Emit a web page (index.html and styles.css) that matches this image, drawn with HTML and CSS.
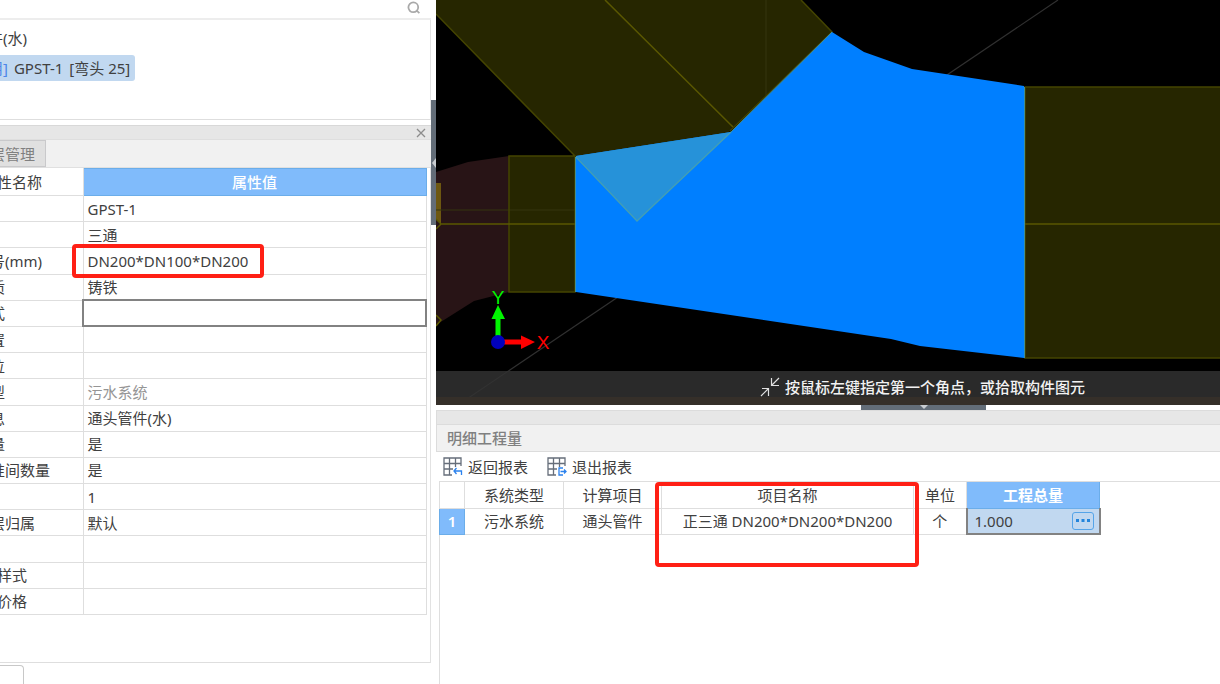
FILE: index.html
```html
<!DOCTYPE html>
<html lang="zh-CN">
<head>
<meta charset="utf-8">
<title>明细工程量</title>
<link rel="stylesheet" href="styles.css">
</head>
<body>
<div class="app">
  <aside class="sidebar">
    <div class="search-row">
      <button class="icon-button" aria-label="搜索"><svg width="14" height="14" viewBox="0 0 14 14" fill="none" stroke="#a9a9a9" stroke-width="1.8"><circle cx="6.3" cy="6.3" r="4.9"/><path d="M9.2 9.2l3.2 3"/></svg></button>
    </div>
    <div class="tree">
      <div class="tree-group">件(水)</div>
      <div class="tree-item"><span class="tree-tag">用]</span><span>GPST-1</span><span>[弯头 25]</span></div>
    </div>
    <div class="dock-bar">
      <button class="icon-button" aria-label="关闭"><svg width="10" height="10" viewBox="0 0 10 10" stroke="#8c8c8c" stroke-width="1.3"><path d="M1 1l8 8M9 1L1 9"/></svg></button>
    </div>
    <div class="tabs"><button class="tab">层管理</button></div>
    <div class="props-wrap">
      <table class="props">
        <colgroup><col class="col-name"><col></colgroup>
        <thead><tr><th class="name-head">性名称</th><th class="value-head">属性值</th></tr></thead>
        <tbody>
          <tr><td></td><td>GPST-1</td></tr>
          <tr><td></td><td>三通</td></tr>
          <tr><td>号(mm)</td><td class="marked">DN200*DN100*DN200<span class="mark mark-spec"></span></td></tr>
          <tr><td>质</td><td>铸铁</td></tr>
          <tr><td>式</td><td class="editing"><input class="cell-input" aria-label="式"></td></tr>
          <tr><td>置</td><td></td></tr>
          <tr><td>位</td><td></td></tr>
          <tr><td>型</td><td class="muted">污水系统</td></tr>
          <tr><td>息</td><td>通头管件(水)</td></tr>
          <tr><td>量</td><td>是</td></tr>
          <tr><td>准间数量</td><td>是</td></tr>
          <tr><td></td><td>1</td></tr>
          <tr><td>层归属</td><td>默认</td></tr>
          <tr><td></td><td></td></tr>
          <tr><td class="indent">样式</td><td></td></tr>
          <tr><td class="indent">价格</td><td></td></tr>
        </tbody>
      </table>
    </div>
    <div class="bottom-tabs"><button class="bottom-tab" aria-label="面板"></button></div>
  </aside>
  <div class="splitter"><button class="collapse-left" aria-label="收起左侧面板"><svg width="5" height="10" viewBox="0 0 5 10"><path d="M5 0v10L1 5z" fill="#c9cdd1"/></svg></button></div>
  <main class="main">
    <section class="viewport">
      <svg class="scene" viewBox="436 0 784 405" preserveAspectRatio="xMinYMin slice">
        <rect x="436" width="784" height="405" fill="#000"/>
        <path d="M458 405L1058 0" stroke="#303030" stroke-width="1.2"/>
        <path d="M436 172L468 162L509 156V292L474 301L436 325z" fill="#281416"/>
        <path d="M436 14L575 156L637 221L832 32L801 0H436z" fill="#262600"/>
        <path d="M509 156h66v136h-66zM1025 87h195v271h-195z" fill="#262600"/>
        <path d="M436 183h5v41l-5 -5z" fill="#6d5710"/>
        <path d="M436 210H575M766 0V96" stroke="#34340f" fill="none"/>
        <path d="M436 14L575 156M801 0L832 32L730 131M509 156h66v136h-66zM1220 87H1025V358H1220" stroke="#444400" stroke-width="1.5" fill="none"/>
        <path d="M605 0L733 127M441 224H575M1025 224H1220M436 229l5 -5l-5 -5M436 315l5 5l-5 6" stroke="#5a5700" stroke-width="1.5" fill="none"/>
        <path d="M576 156L731 132L832 32L864 52L912 69L1024 86V358L920 346L891 339L576 292z" fill="#007fff"/>
        <path d="M576 156L731 132L637 221z" fill="#2692d9"/>
        <path d="M576 157L637 221L731 132" stroke="#429eb5" stroke-width="1.5" fill="none"/>
        <path d="M731 132L832 32M575.500 157V292M1024.500 87V358" stroke="#3e8f9b" fill="none"/>
        <path d="M495.500 337V319H491.500L498 305L505 319H500.500V337z" fill="#00f500"/>
        <path d="M504 339.500H521V335.500L535 342L521 349V344.500H504z" fill="#f00"/>
        <circle cx="498" cy="342" r="7" fill="#0000bd"/>
        <text class="axis" x="498" y="304" text-anchor="middle" fill="#00f500">Y</text>
        <text class="axis" x="543" y="349" text-anchor="middle" fill="#f00">X</text>
      </svg>
      <div class="hint">
        <svg width="20" height="20" viewBox="0 0 20 20" fill="none" stroke="#e0e0e0" stroke-width="1.2"><path d="M19 1L11.500 8.500M11.500 1v7.500H19M1 19l7.500-7.500M2 11.500h6.500V19"/></svg>
        <span>按鼠标左键指定第一个角点，或拾取构件图元</span>
      </div>
    </section>
    <section class="detail">
      <button class="collapse-down" aria-label="收起明细面板"><svg width="10" height="5" viewBox="0 0 10 5"><path d="M1 0h8L5 4z" fill="#c9cdd1"/></svg></button>
      <div class="detail-bar"></div>
      <h2 class="detail-title">明细工程量</h2>
      <div class="toolbar">
        <button class="tool"><svg width="20" height="19" viewBox="0 0 20 19" fill="none" stroke="#666e7a" stroke-width="1.3"><path d="M9 18H1V1h17v8M1 6.500h17M1 12h9M6.500 1v17M12.500 1v9"/><path d="M13.500 11L11 14l2.500 3M11 14h7.500v4" stroke="#2b82ee"/></svg>返回报表</button>
        <button class="tool"><svg width="20" height="19" viewBox="0 0 20 19" fill="none" stroke="#666e7a" stroke-width="1.3"><path d="M9 18H1V1h17v8M1 6.500h17M1 12h9M6.500 1v17M12.500 1v9"/><path d="M16 11h-4v7h4M13.500 14.500H19M17 12.500l2 2l-2 2" stroke="#2b82ee"/></svg>退出报表</button>
      </div>
      <div class="grid-wrap">
        <table class="qty">
          <colgroup><col class="w-index"><col class="w-system"><col class="w-calc"><col class="w-item"><col class="w-unit"><col class="w-total"></colgroup>
          <thead><tr><th></th><th>系统类型</th><th>计算项目</th><th class="marked">项目名称<span class="mark mark-item"></span></th><th>单位</th><th class="selected-head">工程总量</th></tr></thead>
          <tbody><tr><td class="row-index">1</td><td>污水系统</td><td>通头管件</td><td>正三通 DN200*DN200*DN200</td><td>个</td><td class="selected-cell"><div class="total">1.000<button class="more" aria-label="更多"><svg width="14" height="4" viewBox="0 0 14 4" fill="#2385dc"><path d="M0 0h3v3H0zM5.500 0h3v3h-3zM11 0h3v3h-3z"/></svg></button></div></td></tr></tbody>
        </table>
      </div>
    </section>
  </main>
</div>
</body>
</html>
```
FILE: styles.css
```css
* { box-sizing: border-box; }
body {
  margin: 0;
  background: #fff;
  color: #404040;
  font: 15px/20px "Noto Sans", "Noto Sans CJK SC", sans-serif;
}
button { margin: 0; padding: 0; border: 0; background: none; color: inherit; font: inherit; }
svg { display: block; flex: none; }
.app { display: flex; height: 100vh; overflow: hidden; }

.sidebar { flex: 0 0 431px; display: flex; flex-direction: column; overflow: hidden; }
.search-row {
  display: flex; justify-content: flex-end; align-items: center;
  height: 20px; padding: 0 10px 2px 0; border-bottom: 2px solid #ededed;
}
.tree { height: 100px; padding-top: 8px; border-right: 1px solid #e2e2e2; border-bottom: 1px solid #dedede; white-space: nowrap; }
.tree-group { margin-left: -12px; }
.tree-item {
  display: flex; gap: 6px;
  width: max-content; margin: 7px 0 0 -17px; padding: 3px 5px;
  border-radius: 3px; background: #c1d8f0;
}
.tree-tag { color: #4b86e8; }
.dock-bar {
  display: flex; justify-content: flex-end; align-items: center;
  height: 15px; margin-top: 5px; padding-right: 5px;
  background: #e6e6e6; border-top: 1px solid #d8d8d8; border-bottom: 1px solid #dedede;
}
.tabs { display: flex; height: 28px; background: #f1f1f1; border-bottom: 1px solid #e0e0e0; }
.tab {
  margin-left: -11px; padding: 0 10px 0 0;
  background: #e0e0e0; border: 1px solid #c9c9cb; color: #808080;
}
.props-wrap { flex: 1; padding-right: 3px; border-right: 1px solid #e2e2e2; border-bottom: 1px solid #dedede; }
.props { width: 100%; height: 447px; border-collapse: collapse; table-layout: fixed; white-space: nowrap; }
.col-name { width: 83px; }
.props th { height: 27px; padding: 0; font-weight: 400; }
.props td { height: 26px; padding: 0 0 0 4px; border: 1px solid #dedede; }
.props td:first-child, .props .name-head { border-left: 0; border-right: 1px solid #dedede; padding: 0; text-indent: -10px; text-align: left; }
.props td.indent:first-child, .props .name-head { text-indent: -3px; }
.props .value-head { background: #80bbfb; color: #fff; font-weight: 500; border: 1px solid #6bade9; }
.props .muted { color: #959595; }
.props .editing { padding: 0; border: 2px solid #828282; }
.cell-input { display: block; width: 100%; height: 22px; padding: 0 4px; border: 0; outline: 0; font: inherit; background: transparent; }
.marked { position: relative; }
.mark { position: absolute; border: 4px solid #ff2015; border-radius: 4px; pointer-events: none; }
.mark-spec { left: -12px; top: -4px; width: 192px; height: 34px; }
.mark-item { left: -7px; right: -6px; top: 0; height: 85px; }
.bottom-tabs { height: 21px; padding-top: 2px; display: flex; }
.bottom-tab { width: 24px; border: 1px solid #c8c8c8; border-left: 0; border-bottom: 0; border-radius: 0 4px 0 0; }

.splitter { flex: 0 0 5px; padding-top: 100px; }
.collapse-left { display: flex; align-items: center; width: 5px; height: 125px; background: #636d78; }

.main { flex: 1; min-width: 0; display: flex; flex-direction: column; }
.viewport { position: relative; flex: 405; min-height: 0; overflow: hidden; background: #000; }
.scene { width: 100%; height: 100%; }
.axis { font: 19px "Liberation Sans", sans-serif; }
.hint {
  position: absolute; left: 0; right: 0; bottom: 0;
  display: flex; align-items: flex-start; gap: 5px;
  height: 34px; padding: 6px 0 0 324px;
  background: rgba(50, 50, 50, .84); border-bottom: 8px solid #352f29;
  color: #f2f2f2; font-weight: 500; white-space: nowrap;
}
.strip { flex: none; }
.detail { position: relative; flex: 274; min-height: 0; display: flex; flex-direction: column; padding-top: 5px; }
.collapse-down { position: absolute; left: 425px; top: 0; display: flex; justify-content: center; width: 125px; height: 5px; background: #636d78; }
.detail-bar { height: 15px; background: #e7e7e7; border: 1px solid #dcdcdc; border-right: 0; }
.detail-title {
  margin: 0; padding: 3px 10px; background: #f1f1f1; color: #808080;
  border-left: 1px solid #dcdcdc; border-bottom: 1px solid #dcdcdc;
  font-size: 15px; font-weight: 500;
}
.toolbar { display: flex; gap: 19px; height: 29px; padding-left: 7px; }
.tool { display: flex; align-items: center; gap: 5px; }
.grid-wrap { flex: 1; margin-left: 3px; border-left: 1px solid #dedede; border-top: 1px solid #dedede; }
.qty { width: 660px; margin-left: -1px; border-collapse: collapse; table-layout: fixed; text-align: center; white-space: nowrap; }
.qty th, .qty td { height: 26px; padding: 0; border: 1px solid #dedede; font-weight: 400; }
.qty th { border-top: 0; }
.w-index { width: 25px; }
.w-system { width: 99px; }
.w-calc { width: 98px; }
.w-item { width: 252px; }
.w-unit { width: 53px; }
.w-total { width: 133px; }
.qty .row-index, .qty .selected-head { background: #80bbfb; border-color: #6bade9; color: #fff; font-weight: 600; }
.qty .selected-cell { background: #c1d8f0; border: 2px solid #828282; border-top-width: 1px; }
.total { display: flex; align-items: center; justify-content: space-between; padding: 0 5px 0 7px; }
.more { display: flex; align-items: center; justify-content: center; width: 22px; height: 18px; border: 1px solid #55a4e8; border-radius: 3px; }
```
